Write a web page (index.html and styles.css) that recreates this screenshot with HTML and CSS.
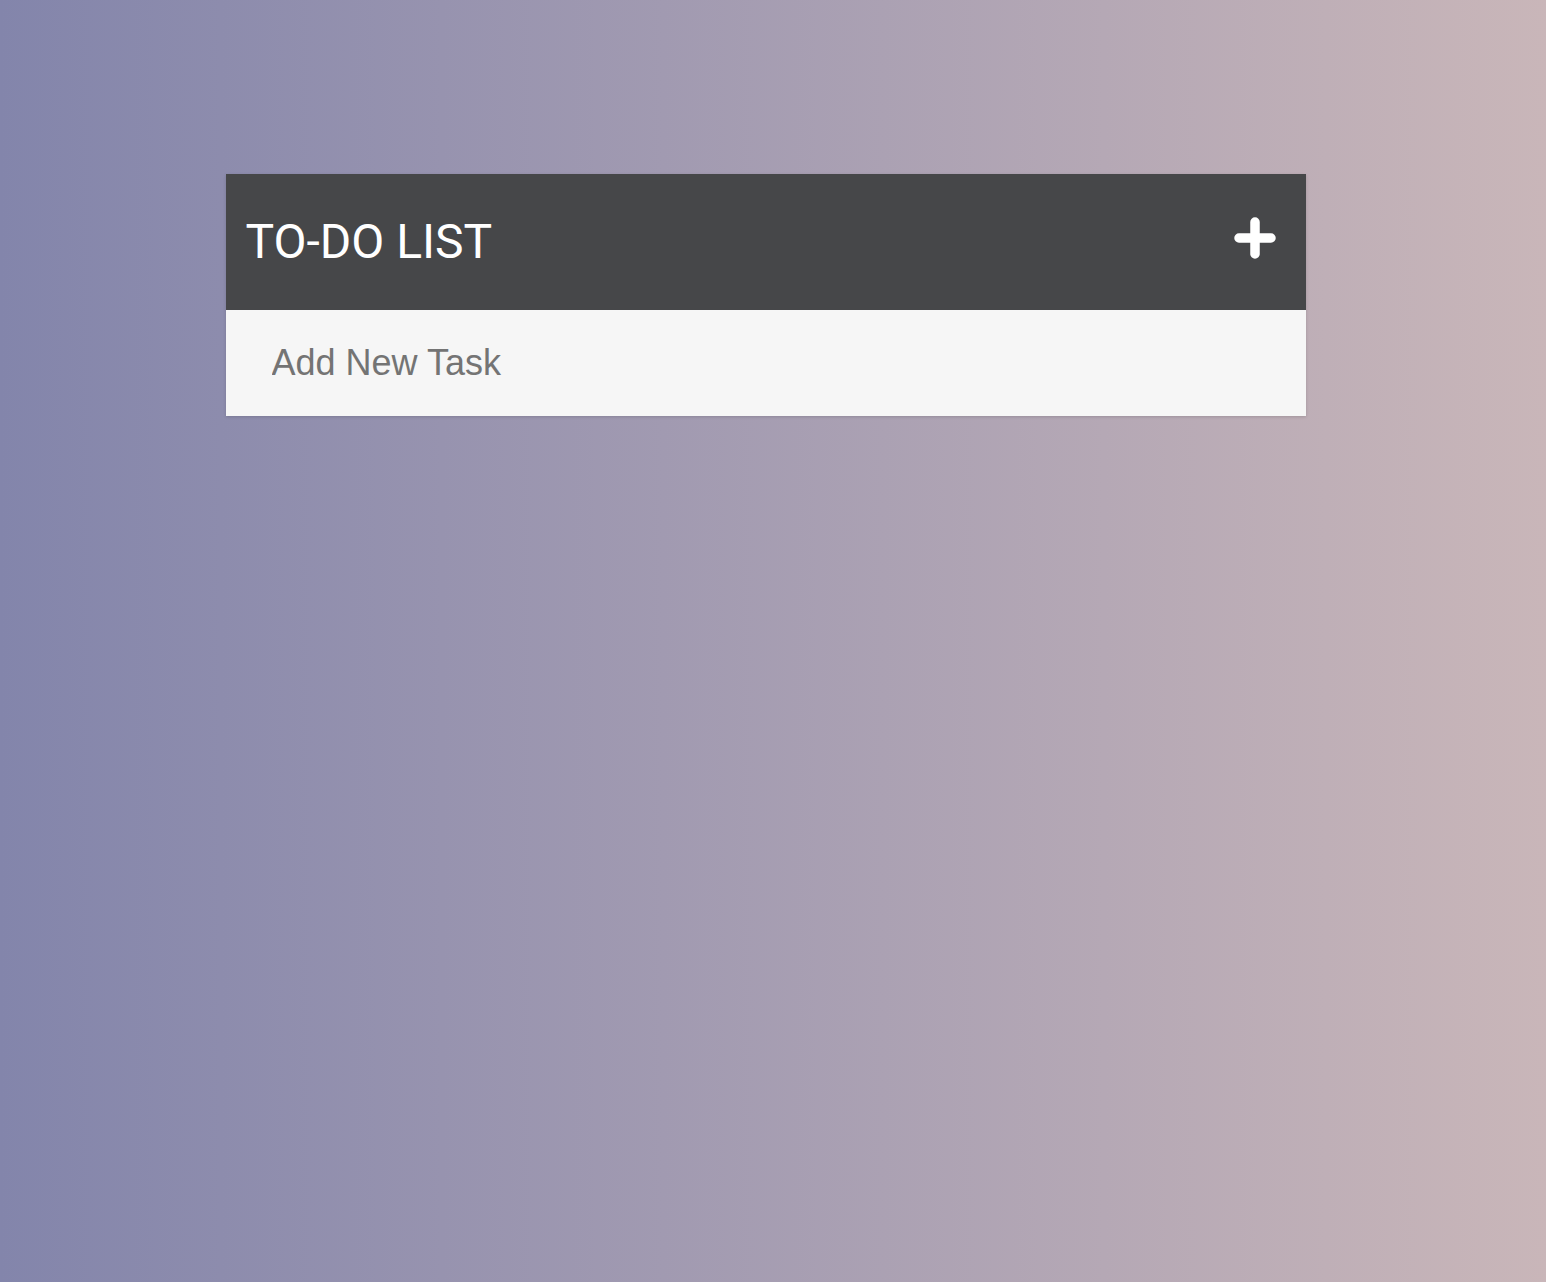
FILE: index.html
```html
<!DOCTYPE html>
<html>
<head>
<meta charset="utf-8">
<link rel="stylesheet" href="styles.css">
</head>
<body>
<div class="page">
  <div class="card">
    <div class="card-header">
      <h1 class="title">TO-DO LIST</h1>
      <button class="add-btn" aria-label="Add">
        <svg width="42" height="42" viewBox="0 0 42 42"><path d="M21 5 V37 M5 21 H37" stroke="#fff" stroke-width="9.5" stroke-linecap="round" fill="none"/></svg>
      </button>
    </div>
    <div class="card-body">
      <input class="task-input" type="text" placeholder="Add New Task">
    </div>
  </div>
</div>
</body>
</html>
```
FILE: styles.css
```css
html, body {
  margin: 0;
  padding: 0;
  height: 100%;
}
body {
  background: linear-gradient(to right, #8385ab, #c9b6b9);
  font-family: "Roboto", "Liberation Sans", sans-serif;
}
.page {
  padding: 174px 15px 0 0;
  display: flex;
  justify-content: center;
}
.card {
  width: 1080px;
  box-shadow: 0 1px 3px rgba(0,0,0,0.15);
}
.card-header {
  height: 136px;
  background: #464749;
  display: flex;
  align-items: center;
  justify-content: space-between;
  padding: 0 30px 0 20px;
  box-sizing: border-box;
}
.title {
  margin: 0;
  font-family: "Roboto", sans-serif;
  font-weight: 400;
  font-size: 48px;
  color: #fff;
  line-height: 1;
}
.add-btn {
  background: none;
  border: 0;
  padding: 0;
  width: 42px;
  height: 42px;
  display: flex;
  position: relative;
  top: -4px;
}
.card-body {
  height: 106px;
  background: #f6f6f6;
  display: flex;
  align-items: center;
  padding: 0 0 0 46px;
}
.task-input {
  border: 0;
  background: transparent;
  outline: none;
  font-family: "Liberation Sans", Arial, sans-serif;
  font-size: 36px;
  color: #747474;
  width: 900px;
  padding: 0;
}
.task-input::placeholder {
  color: #747474;
  opacity: 1;
}
```
